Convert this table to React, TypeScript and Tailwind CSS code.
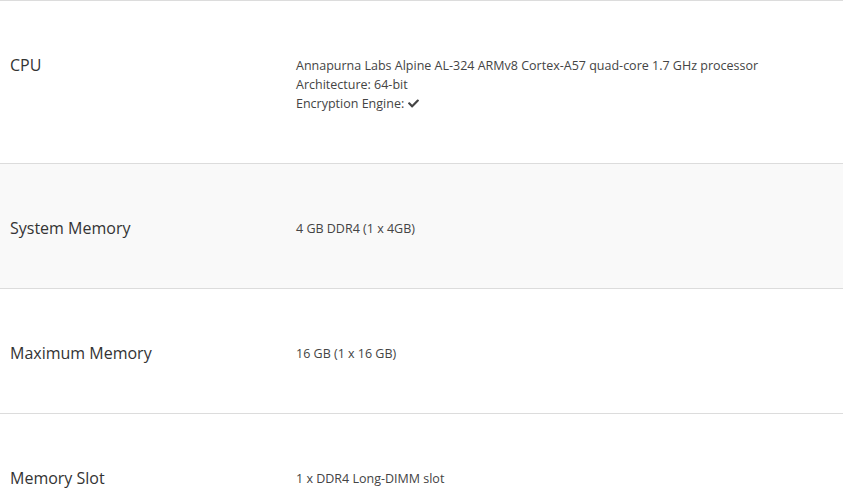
import { FaCheck } from 'react-icons/fa';

const rows = [
  {
    label: 'CPU',
    gray: false,
    value: (
      <>
        <div>Annapurna Labs Alpine AL-324 ARMv8 Cortex-A57 quad-core 1.7 GHz processor</div>
        <div>Architecture: 64-bit</div>
        <div className="flex items-center gap-[4px]">
          Encryption Engine: <FaCheck size={11} className="text-[#444]" />
        </div>
      </>
    ),
  },
  { label: 'System Memory', gray: true, value: <div>4 GB DDR4 (1 x 4GB)</div> },
  { label: 'Maximum Memory', gray: false, value: <div>16 GB (1 x 16 GB)</div> },
  { label: 'Memory Slot', gray: false, value: <div>1 x DDR4 Long-DIMM slot</div> },
];

export default function App() {
  return (
    <div className="w-[843px] h-[495px] overflow-hidden bg-white font-['Open_Sans',sans-serif]">
      <div className="border-t border-[#dcdcdc]">
        {rows.map((row) => (
          <div
            key={row.label}
            className={`flex border-b border-[#dcdcdc] pt-[53px] pb-[50px] ${
              row.gray ? 'bg-[#f9f9f9]' : 'bg-white'
            }`}
          >
            <div className="w-[286px] shrink-0 pl-[10px] pt-[2px] text-[16px] leading-[19px] text-[#333]">
              {row.label}
            </div>
            <div className="pl-[10px] pt-[2px] text-[12.5px] leading-[19px] text-[#444]">
              {row.value}
            </div>
          </div>
        ))}
      </div>
    </div>
  );
}
